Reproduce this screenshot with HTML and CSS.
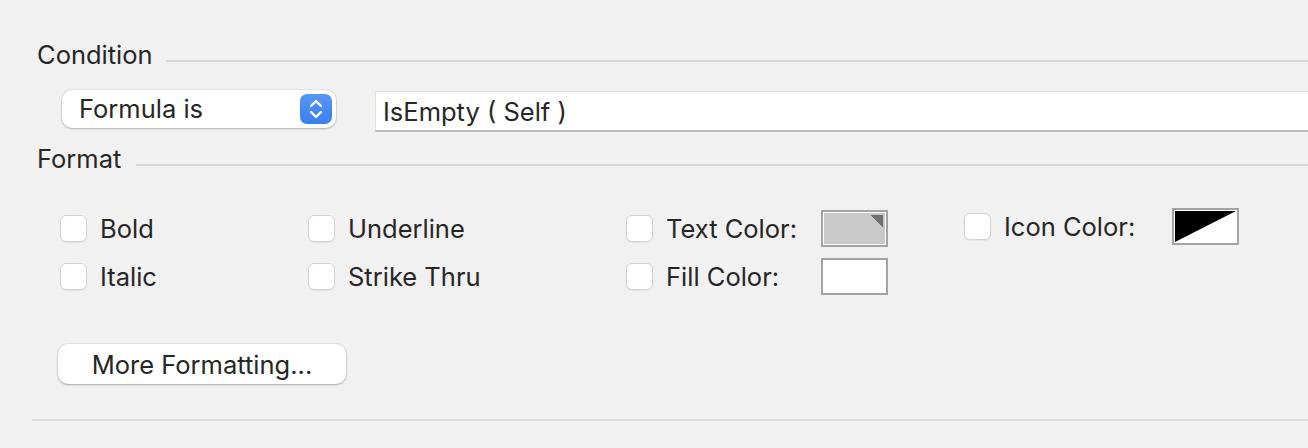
FILE: index.html
```html
<!DOCTYPE html>
<html>
<head>
<meta charset="utf-8">
<link rel="stylesheet" href="styles.css">
</head>
<body>
<div class="panel">
  <div class="group-head head-condition">
    <span class="group-title">Condition</span>
    <span class="rule"></span>
  </div>
  <div class="condition-row">
    <div class="popup">
      <span class="popup-label">Formula is</span>
      <span class="stepper">
        <svg width="32" height="30" viewBox="0 0 32 30">
          <path d="M11 12 L16 7 L21 12" fill="none" stroke="#fff" stroke-width="2.4" stroke-linecap="round" stroke-linejoin="round"/>
          <path d="M11 18 L16 23 L21 18" fill="none" stroke="#fff" stroke-width="2.4" stroke-linecap="round" stroke-linejoin="round"/>
        </svg>
      </span>
    </div>
    <div class="formula-field">IsEmpty ( Self )</div>
  </div>
  <div class="group-head head-format">
    <span class="group-title">Format</span>
    <span class="rule"></span>
  </div>
  <div class="format-grid">
    <div class="col col-1">
      <label class="check"><span class="box"></span><span class="lbl">Bold</span></label>
      <label class="check"><span class="box"></span><span class="lbl">Italic</span></label>
    </div>
    <div class="col col-2">
      <label class="check"><span class="box"></span><span class="lbl">Underline</span></label>
      <label class="check"><span class="box"></span><span class="lbl">Strike Thru</span></label>
    </div>
    <div class="col col-3">
      <div class="check"><span class="box"></span><span class="lbl lbl-color">Text Color:</span><span class="well well-text"><span class="corner"></span></span></div>
      <div class="check"><span class="box"></span><span class="lbl lbl-color">Fill Color:</span><span class="well well-fill"></span></div>
    </div>
    <div class="col col-4">
      <div class="check icon-row"><span class="box"></span><span class="lbl lbl-icon">Icon Color:</span><span class="well well-icon">
        <svg width="63" height="34" viewBox="0 0 63 34" preserveAspectRatio="none"><polygon points="0,0 63,0 0,34" fill="#000"/></svg>
      </span></div>
    </div>
  </div>
  <div class="button-row">
    <button class="push">More Formatting...</button>
  </div>
  <div class="bottom-rule"></div>
</div>
</body>
</html>
```
FILE: styles.css
```css
html, body {
  margin: 0;
  padding: 0;
  background: #f1f1f1;
}
body {
  width: 1308px;
  height: 448px;
  overflow: hidden;
  font-family: Inter, "Liberation Sans", sans-serif;
  font-size: 25.5px;
  color: #262626;
}
.panel {
  padding-top: 40px;
  display: flex;
  flex-direction: column;
}
.group-head {
  display: flex;
  align-items: center;
  padding-left: 37px;
  height: 30px;
}
.group-title {
  line-height: 30px;
}
.rule {
  flex: 1;
  height: 0;
  border-top: 2px solid #d9d9d9;
  margin-top: 12px;
}
.head-condition .rule { margin-left: 13px; }
.head-format { margin-top: 12px; }
.head-format .rule { margin-left: 15px; margin-top: 12px; }

.condition-row {
  display: flex;
  align-items: flex-start;
  margin-top: 20px;
  padding-left: 62px;
}
.popup {
  width: 274px;
  height: 38px;
  box-sizing: border-box;
  background: #fff;
  border-radius: 10px;
  box-shadow: 0 0 0 1px rgba(0,0,0,0.06), 0 1px 2px rgba(0,0,0,0.22);
  display: flex;
  align-items: center;
  padding-left: 17px;
  padding-right: 4px;
}
.popup-label { flex: 1; line-height: 30px; }
.stepper {
  width: 32px;
  height: 30px;
  border-radius: 7px;
  background: linear-gradient(#5596f6, #3b7ff0);
  display: flex;
}
.formula-field {
  margin-left: 39px;
  margin-top: 1px;
  flex: 1;
  height: 41px;
  box-sizing: border-box;
  background: #fff;
  border-top: 1px solid #dcdcdc;
  border-bottom: 2px solid #bdbdbd;
  border-left: 1px solid #e0e0e0;
  padding-left: 7px;
  line-height: 39px;
}

.format-grid {
  display: flex;
  margin-top: 36px;
  padding-left: 60px;
}
.col {
  display: flex;
  flex-direction: column;
  gap: 11px;
}
.col-1 { width: 248px; }
.col-2 { width: 318px; }
.col-3 { width: 338px; }
.check {
  display: flex;
  align-items: center;
  height: 37px;
}
.box {
  width: 27px;
  height: 27px;
  box-sizing: border-box;
  background: #fff;
  border: 1px solid #d2d2d2;
  border-radius: 6px;
  box-shadow: 0 1px 1px rgba(0,0,0,0.05);
  flex: none;
}
.lbl {
  margin-left: 13px;
  line-height: 28px;
}
.lbl-color { width: 155px; }
.lbl-icon { width: 168px; }
.icon-row { margin-top: -2px; }
.well {
  width: 67px;
  height: 37px;
  box-sizing: border-box;
  border: 2px solid #a3a3a3;
  padding: 1px;
  background: #fff;
  display: block;
  position: relative;
  flex: none;
}
.well-text::before {
  content: "";
  display: block;
  width: 100%;
  height: 100%;
  background: #c9c9c9;
}
.corner {
  position: absolute;
  top: 3px;
  right: 3px;
  width: 12px;
  height: 12px;
  background: linear-gradient(to bottom left, #6f6f6f 50%, transparent 52%);
}
.well-icon svg { display: block; width: 100%; height: 100%; }

.button-row {
  margin-top: 49px;
  padding-left: 58px;
}
.push {
  width: 288px;
  height: 40px;
  border: none;
  background: #fff;
  border-radius: 10px;
  box-shadow: 0 0 0 1px rgba(0,0,0,0.06), 0 1px 2px rgba(0,0,0,0.25);
  font-family: Inter, "Liberation Sans", sans-serif;
  font-size: 25.5px;
  color: #262626;
  padding: 0;
}
.bottom-rule {
  margin-top: 35px;
  margin-left: 32px;
  border-top: 2px solid #dedede;
}
```
